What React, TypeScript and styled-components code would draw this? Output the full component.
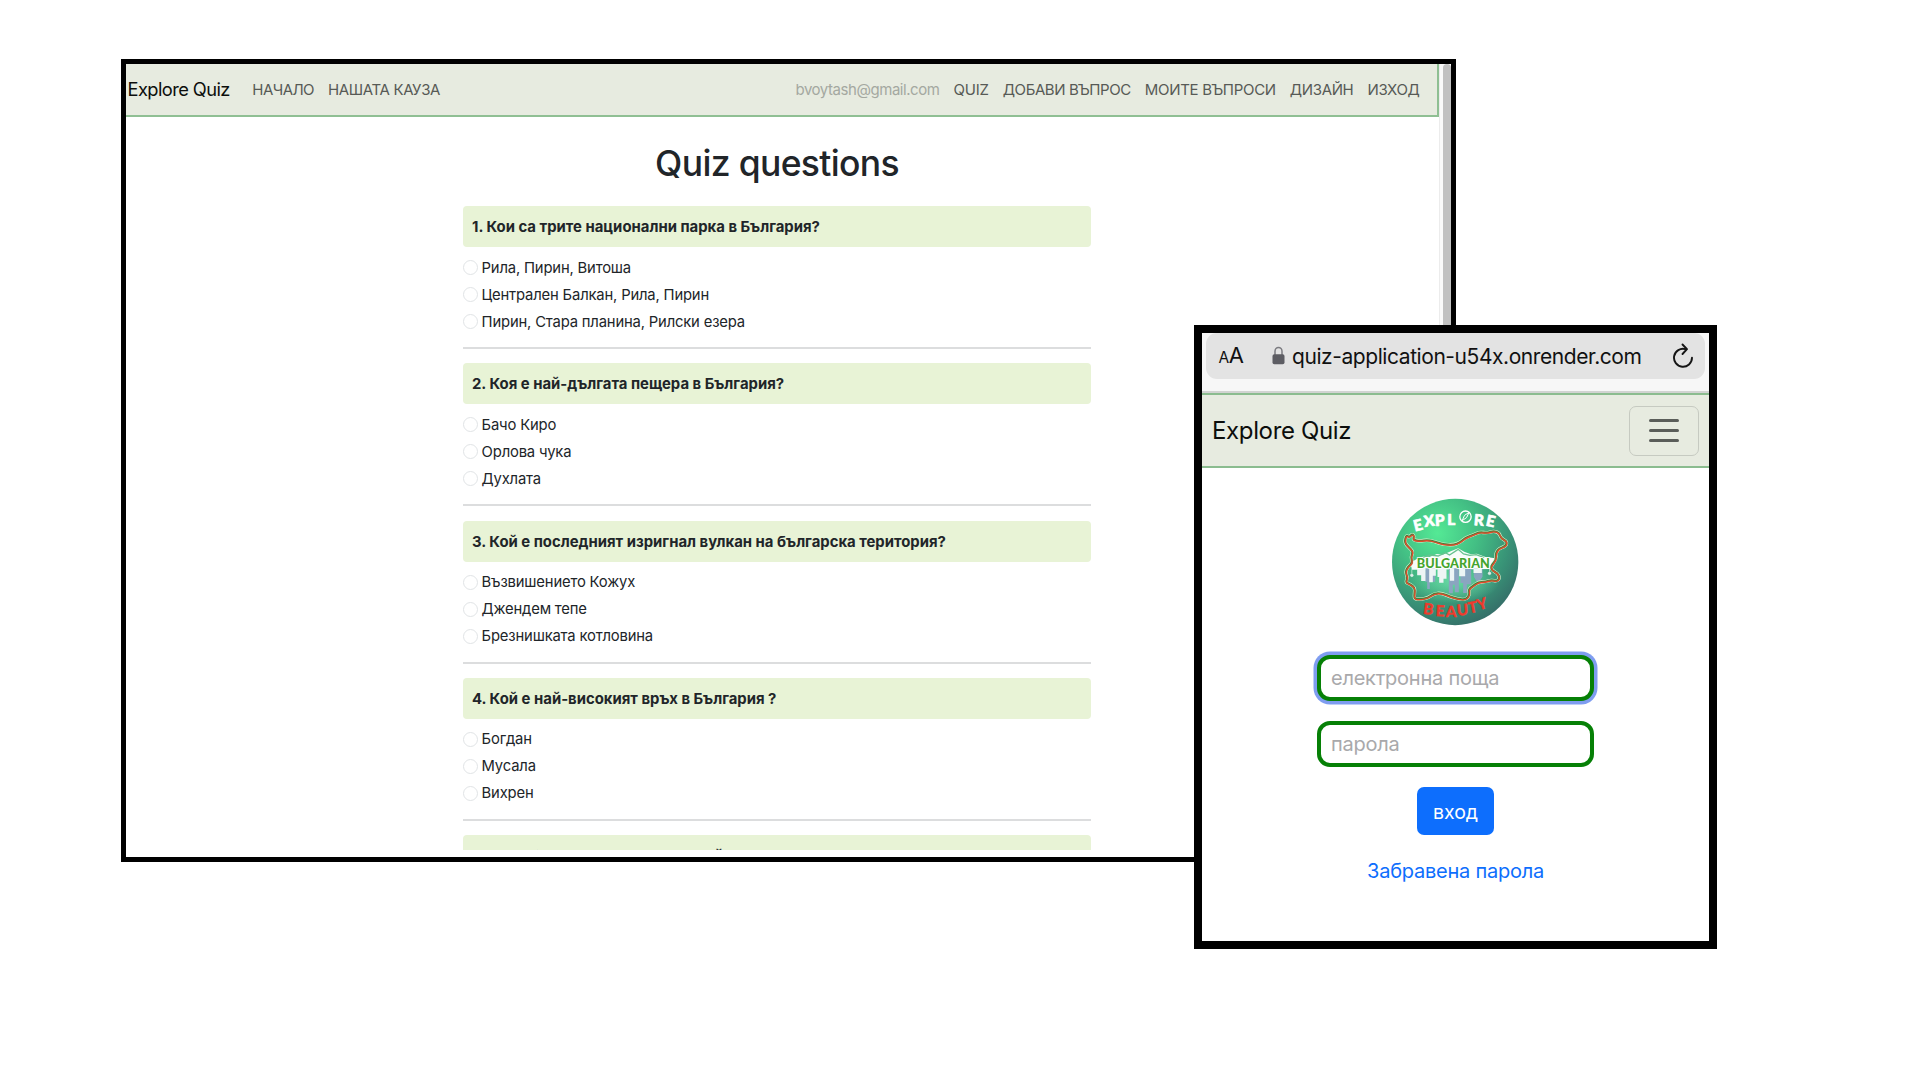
import React from "react";
import styled, { createGlobalStyle } from "styled-components";

const GlobalStyle = createGlobalStyle`
  * { box-sizing: border-box; }
  body { margin: 0; background: #fff; }
  #root { font-family: Inter, "Liberation Sans", sans-serif; }
`;

const Canvas = styled.main`
  position: relative;
  width: 1920px;
  height: 1080px;
  overflow: hidden;
  background: #fff;
`;

/* ---------- desktop window ---------- */

const DesktopWindow = styled.section`
  position: absolute;
  left: 121px;
  top: 59px;
  width: 1335px;
  height: 803px;
  border: 5px solid #000;
  display: flex;
  background: #fff;
`;

const DesktopPage = styled.div`
  width: 1313px;
  height: 786px;
  overflow: hidden;
`;

const Scrollbar = styled.div`
  flex: 1;
  border-left: 1px solid #ececec;
  padding-left: 3px;
  background: #fafafa;
`;

const ScrollThumb = styled.div`
  width: 8px;
  height: 100%;
  border-radius: 4px 4px 0 0;
  background: #c1c1c1;
`;

const DesktopHeader = styled.header`
  height: 53px;
  padding: 0 17.5px 0 1.5px;
  display: flex;
  align-items: center;
  background: #e7ebe0;
  border: solid #8fbf93;
  border-width: 0 2px 2px 0;
`;

const Brand = styled.span<{ $size: number; $track: number }>`
  font-size: ${(p) => p.$size}px;
  letter-spacing: ${(p) => p.$track}px;
  line-height: 1.5;
  color: #0c0e0c;
  white-space: nowrap;
`;

const NavGroup = styled.nav<{ $end?: boolean }>`
  display: flex;
  gap: 14px;
  margin-left: ${(p) => (p.$end ? "auto" : "22.5px")};
  padding-top: 1px;
`;

const NavItem = styled.a<{ $track: number; $muted?: boolean }>`
  font-size: 15px;
  line-height: 24px;
  letter-spacing: ${(p) => p.$track}px;
  color: ${(p) => (p.$muted ? "#a4a8a0" : "#575a56")};
  white-space: nowrap;
`;

const QuizColumn = styled.div`
  width: 628px;
  margin: 0 auto 0 337px;
`;

const Title = styled.h1`
  margin: 22.5px 0 18.8px;
  font-size: 35.5px;
  line-height: 48px;
  font-weight: 500;
  letter-spacing: -0.66px;
  text-align: center;
  color: #212529;
`;

const Question = styled.section`
  padding-bottom: 14.15px;
`;

const QuestionTitle = styled.h2`
  height: 41px;
  margin: 0 0 7px;
  padding: 0 9px;
  border-radius: 4px;
  background: #e8f3d6;
  font-size: 14.88px;
  line-height: 42px;
  font-weight: 700;
  color: #212529;
  white-space: pre;
`;

const Option = styled.label`
  height: 27px;
  display: flex;
  align-items: center;
  gap: 3.6px;
  font-size: 14.8px;
  letter-spacing: -0.17px;
  color: #212529;
`;

const Radio = styled.span`
  width: 15px;
  height: 15px;
  border: 1px solid #e1e4e6;
  border-radius: 50%;
`;

const Divider = styled.hr`
  height: 2px;
  margin: 12px 0 0;
  border: 0;
  background: #dcddde;
`;

/* ---------- phone window ---------- */

const PhoneWindow = styled.section`
  position: absolute;
  left: 1194px;
  top: 325px;
  width: 523px;
  height: 624px;
  border: 8px solid #000;
  background: #fff;
`;

const AddressArea = styled.div`
  height: 60px;
  padding: 0 4px;
  background: #f7f7f7;
  border-bottom: 2px solid #d2d3d2;
`;

const AddressBar = styled.div`
  height: 46px;
  padding: 0 11px 0 12.5px;
  border-radius: 11px;
  background: #e3e3e3;
  display: flex;
  align-items: center;
  color: #111;
`;

const TextSize = styled.span`
  width: 53px;
  font-size: 22px;
  line-height: 44px;
  letter-spacing: -0.4px;
  small { font-size: 15.5px; }
`;

const Url = styled.span`
  flex: 1;
  margin-left: 7.5px;
  font-size: 21px;
  letter-spacing: -0.43px;
  white-space: nowrap;
`;

const PhoneHeader = styled.header`
  height: 75px;
  padding: 0 10px;
  display: flex;
  align-items: center;
  justify-content: space-between;
  background: #e7ebe0;
  border: solid #8bbc8f;
  border-width: 2px 0;
`;

const Toggle = styled.button`
  width: 70px;
  height: 50px;
  padding: 0;
  border: 1px solid #c6cac1;
  border-radius: 7px;
  background: transparent;
  display: flex;
  flex-direction: column;
  align-items: center;
  justify-content: center;
  gap: 7px;
`;

const ToggleBar = styled.i`
  width: 30px;
  height: 3px;
  border-radius: 1.5px;
  background: #5a5d59;
`;

const Login = styled.form`
  display: flex;
  flex-direction: column;
  align-items: center;
  padding-top: 17px;
`;

const LogoArt = styled.svg`
  width: 150px;
  height: 150px;
  margin: 0 1px 20px 0;
  transform: translateX(-0.5px);
`;

const Field = styled.input<{ $focused?: boolean }>`
  width: 277px;
  height: 46px;
  margin-bottom: 20px;
  padding: 0 10px;
  border: 4px solid #068006;
  border-radius: 13px;
  outline: none;
  box-shadow: ${(p) => (p.$focused ? "0 0 0 3.5px #7f9df0" : "none")};
  background: #fff;
  font: 20px/38px Inter, sans-serif;
  letter-spacing: -0.24px;
  &::placeholder { color: #a9a9ab; opacity: 1; }
`;

const Submit = styled.button`
  width: 77px;
  height: 48px;
  padding: 1px 0 0;
  border: 0;
  border-radius: 7px;
  background: #0d6efd;
  color: #fff;
  font: 19.5px Inter, sans-serif;
`;

const Forgot = styled.a`
  margin-top: 21px;
  font-size: 20px;
  line-height: 30px;
  letter-spacing: -0.24px;
  color: #0d6efd;
`;

const questions = [
  { title: "1. Кои са трите национални парка в България?", options: ["Рила, Пирин, Витоша", "Централен Балкан, Рила, Пирин", "Пирин, Стара планина, Рилски езера"] },
  { title: "2. Коя е най-дългата пещера в България?", options: ["Бачо Киро", "Орлова чука", "Духлата"] },
  { title: "3. Кой е последният изригнал вулкан на българска територия?", options: ["Възвишението Кожух", "Джендем тепе", "Брезнишката котловина"] },
  { title: "4. Кой е най-високият връх в България ?", options: ["Богдан", "Мусала", "Вихрен"] },
  { title: "5. Коя област в България има най", options: [] },
];

const LockIcon = () => (
  <svg width="13" height="20" viewBox="0 0 13 20">
    <path d="M3 9V5.2a3.5 3.7 0 0 1 7 0V9" fill="none" stroke="#7b7b80" strokeWidth="1.5" />
    <rect x="0.5" y="8.3" width="12" height="10" rx="1.8" fill="#5d5d63" />
  </svg>
);

const ReloadIcon = () => (
  <svg width="21" height="26" viewBox="0 0 21 26" fill="none" stroke="#151515" strokeWidth="1.9" strokeLinecap="round" strokeLinejoin="round">
    <path d="M12.5 6.1A9 9 0 1 0 19 14.8" />
    <path d="M9.5 1.5L14 6.2L9.5 11" />
  </svg>
);

// Outline of the country, traced clockwise from its north-west corner.
const outline: [number, number][] = [
  [80, 150], [89, 157], [98, 147], [104, 153], [100, 165], [122, 168], [143, 165], [163, 169], [190, 178], [222, 180], [242, 172], [258, 158], [278, 151], [300, 141], [322, 144], [342, 138], [359, 143], [364, 160], [382, 168], [380, 183], [359, 190], [349, 203], [350, 225], [334, 243], [337, 256], [354, 264], [361, 279], [352, 289], [335, 285], [315, 291], [297, 291], [280, 303], [267, 313], [271, 329], [259, 344], [237, 342], [212, 335], [185, 324], [163, 326], [145, 339], [122, 343], [104, 342], [105, 325], [106, 308], [92, 298], [78, 292], [85, 277], [77, 262], [85, 245], [99, 234], [94, 216], [101, 200], [88, 187], [75, 173],
];

const smooth = (pts: [number, number][]) => {
  const mid = (a: [number, number], b: [number, number]) => `${(a[0] + b[0]) / 2} ${(a[1] + b[1]) / 2}`;
  const last = pts[pts.length - 1];
  return `M${mid(last, pts[0])}` + pts.map((p, i) => `Q${p[0]} ${p[1]} ${mid(p, pts[(i + 1) % pts.length])}`).join("") + "Z";
};
const BORDER = smooth(outline);

type Glyph = [string, number, number, number];
const explore: Glyph[] = [["E", 119, 136, -14], ["X", 151, 124, -8], ["P", 182, 122, -3], ["L", 215, 121, 0], ["R", 297, 121, 5], ["E", 330, 124, 12]];
const beauty: Glyph[] = [["B", 145, 388, 7], ["E", 181, 394, 3], ["A", 215, 395, 0], ["U", 250, 391, -5], ["T", 283, 383, -11], ["Y", 312, 372, -17]];

const Logo = () => (
  <LogoArt viewBox="0 0 450 450" fontFamily="Lato, Inter, sans-serif" fontWeight="900">
    <defs>
      <radialGradient id="globe" cx="0.36" cy="0.27" r="0.78">
        <stop offset="0" stopColor="#54e995" />
        <stop offset="0.4" stopColor="#43bf84" />
        <stop offset="0.75" stopColor="#389176" />
        <stop offset="1" stopColor="#356d68" />
      </radialGradient>
      <radialGradient id="glow" cx="0.5" cy="0.5" r="0.5">
        <stop offset="0" stopColor="#76e8b2" stopOpacity="0.75" />
        <stop offset="1" stopColor="#76e8b2" stopOpacity="0" />
      </radialGradient>
    </defs>
    <circle cx="227" cy="231" r="189.5" fill="url(#globe)" />
    <ellipse cx="225" cy="290" rx="135" ry="65" fill="url(#glow)" />
    <path d="M112 222L134 214L150 216L172 207L190 209L214 199L236 190L254 200L274 208L292 206L318 216L348 220L338 252L98 254Q86 232 112 222Z" fill="#f8fcf9" />
    <path d="M130 217L152 210L176 213L198 203L210 210L236 193L252 207L271 211L290 209L314 218" fill="none" stroke="#67c18f" strokeWidth="4" />
    <path d="M137 250h30v40h-16v22h-8v-22h-6zM208 250h30v72h-12v-23h-6v26h-12zM243 250h32v48h-13v26h-11v-30h-8zM283 250h26v25l-10 15h-7l-9-15z" fill="#8aa5c0" />
    <path d="M113 250h25v38h-13v-17h-12zM149 250h20v22h-9v20h-11zM174 250h27v31h-9v12h-13v-17h-5zM211 250h13v37h-13zM239 250h18v24h-18zM282 250h25v14h-25z" fill="#edf5f5" />
    <g stroke="#e0efe9" strokeWidth="2" fill="#e0efe9"><path d="M97 250V266M330 249V260" /><circle cx="97" cy="271" r="4" /><circle cx="330" cy="265" r="4" /></g>
    <g fill="none" strokeLinejoin="round">
      <path d={BORDER} stroke="#e7edcf" strokeWidth="10" />
      <path d={BORDER} stroke="#378940" strokeWidth="6.5" />
      <path d={BORDER} stroke="#e3492b" strokeWidth="4" transform="translate(1 1.5)" />
    </g>
    <text x="112" y="249" fontSize="38" textLength="219" fill="#45a42d" stroke="#fff" strokeWidth="5" paintOrder="stroke">BULGARIAN</text>
    <g textAnchor="middle" fontSize="46" fill="#fff" stroke="#fff" strokeWidth="2" strokeLinejoin="round">
      {explore.map(([c, x, y, r], i) => <text key={i} transform={`translate(${x} ${y}) rotate(${r})`}>{c}</text>)}
    </g>
    <circle cx="258" cy="95" r="17" fill="none" stroke="#fff" strokeWidth="4" />
    <path d="M269 82L261 98L248 107L255 91Z" fill="none" stroke="#fff" strokeWidth="3" />
    <g textAnchor="middle" fontSize="46" fill="#ee3b2c" stroke="#ee3b2c" strokeWidth="1" strokeLinejoin="round">
      {beauty.map(([c, x, y, r], i) => <text key={i} transform={`translate(${x} ${y}) rotate(${r})`}>{c}</text>)}
    </g>
  </LogoArt>
);

export default function App() {
  return (
    <Canvas>
      <GlobalStyle />
      <DesktopWindow>
        <DesktopPage>
          <DesktopHeader>
            <Brand $size={18.3} $track={-0.58}>Explore Quiz</Brand>
            <NavGroup>
              <NavItem $track={-0.55}>НАЧАЛО</NavItem>
              <NavItem $track={-0.36}>НАШАТА КАУЗА</NavItem>
            </NavGroup>
            <NavGroup $end>
              <NavItem $track={-0.45} $muted>bvoytash@gmail.com</NavItem>
              <NavItem $track={-0.2}>QUIZ</NavItem>
              <NavItem $track={-0.42}>ДОБАВИ ВЪПРОС</NavItem>
              <NavItem $track={-0.3}>МОИТЕ ВЪПРОСИ</NavItem>
              <NavItem $track={-0.34}>ДИЗАЙН</NavItem>
              <NavItem $track={-0.34}>ИЗХОД</NavItem>
            </NavGroup>
          </DesktopHeader>
          <QuizColumn>
            <Title>Quiz questions</Title>
            {questions.map((q) => (
              <Question key={q.title}>
                <QuestionTitle>{q.title}</QuestionTitle>
                {q.options.map((o) => (
                  <Option key={o}><Radio />{o}</Option>
                ))}
                {q.options.length > 0 && <Divider />}
              </Question>
            ))}
          </QuizColumn>
        </DesktopPage>
        <Scrollbar><ScrollThumb /></Scrollbar>
      </DesktopWindow>

      <PhoneWindow>
        <AddressArea>
          <AddressBar>
            <TextSize><small>A</small>A</TextSize>
            <LockIcon />
            <Url>quiz-application-u54x.onrender.com</Url>
            <ReloadIcon />
          </AddressBar>
        </AddressArea>
        <PhoneHeader>
          <Brand $size={24} $track={-0.36}>Explore Quiz</Brand>
          <Toggle type="button"><ToggleBar /><ToggleBar /><ToggleBar /></Toggle>
        </PhoneHeader>
        <Login>
          <Logo />
          <Field placeholder="електронна поща" $focused />
          <Field placeholder="парола" type="password" />
          <Submit type="button">вход</Submit>
          <Forgot>Забравена парола</Forgot>
        </Login>
      </PhoneWindow>
    </Canvas>
  );
}
